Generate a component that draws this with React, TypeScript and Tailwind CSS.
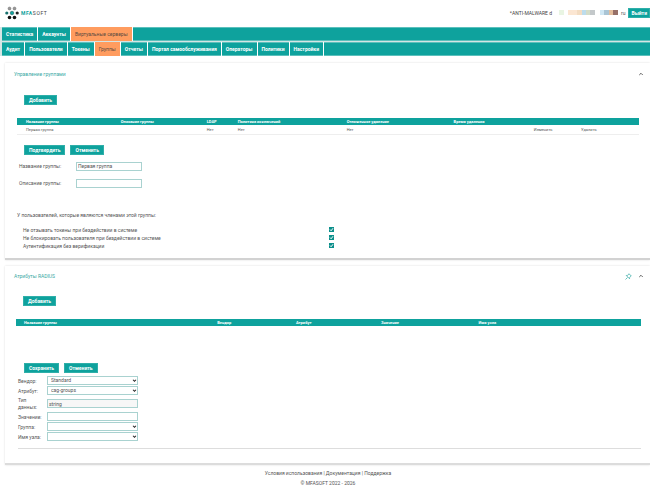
import React, { useState } from "react";
import { ChevronUp } from "lucide-react";

const topTabs = ["Статистика", "Аккаунты", "Виртуальные серверы"];
const subTabs = [
  "Аудит",
  "Пользователи",
  "Токены",
  "Группы",
  "Отчеты",
  "Портал самообслуживания",
  "Операторы",
  "Политики",
  "Настройки",
];

function TabBar({ items, active, label }: { items: string[]; active: string; label: string }) {
  return (
    <nav aria-label={label} className="flex h-[14px] border-y border-[#5cc0bc] bg-[#0ea29d]">
      {items.map((item) => (
        <a
          key={item}
          href="#"
          aria-current={item === active ? "page" : undefined}
          className={
            item === active
              ? "-my-px flex items-center border-r border-white bg-[#ff9c5f] px-1 text-[#5a4a40]"
              : "-my-px flex items-center border-r border-white px-1 font-bold text-white"
          }
        >
          {item}
        </a>
      ))}
    </nav>
  );
}

function Button({ children, narrow = false }: { children: React.ReactNode; narrow?: boolean }) {
  return (
    <button
      type="button"
      className={`h-[10px] border border-[#2fafa9] bg-[#0ea29d] text-[5px] leading-[8px] font-bold text-white ${narrow ? "px-[2px]" : "px-1"}`}
    >
      {children}
    </button>
  );
}

const fieldBox = "h-[9px] border border-[#a9d2d0] text-[5px] leading-[7px] text-[#555]";

function TextRow({ id, label, value }: { id: string; label: string; value: string }) {
  return (
    <div className="flex h-[17px] items-center">
      <label htmlFor={id} className="w-[57px]">
        {label}
      </label>
      <input id={id} type="text" defaultValue={value} className={`${fieldBox} w-[66px] bg-white px-px`} />
    </div>
  );
}

function SelectRow({ id, label, value }: { id: string; label: string; value: string }) {
  return (
    <div className="flex h-[10px] items-center">
      <label htmlFor={id} className="w-[29px]">
        {label}
      </label>
      <div className="relative">
        <select id={id} className={`${fieldBox} block w-[91px] appearance-none bg-white pl-[3px]`} defaultValue={value}>
          <option>{value}</option>
        </select>
        <svg viewBox="0 0 6 4" className="pointer-events-none absolute top-[3px] right-[1px] h-[3px] w-[5px]" fill="none" stroke="#222" strokeWidth="1.4">
          <path d="M1 1l2 2 2-2" />
        </svg>
      </div>
    </div>
  );
}

function Check({ id, label }: { id: string; label: string }) {
  const [on, setOn] = useState(true);
  return (
    <div className="flex h-[8px] items-center">
      <label htmlFor={id} className="w-[306px]">
        {label}
      </label>
      <span className="relative h-[5px] w-[5px]">
        <input
          id={id}
          type="checkbox"
          checked={on}
          onChange={() => setOn(!on)}
          className="block h-[5px] w-[5px] appearance-none border border-[#0b8f8b] bg-white checked:bg-[#0b8f8b]"
        />
        {on && (
          <svg viewBox="0 0 10 10" className="pointer-events-none absolute inset-0 h-[5px] w-[5px]" fill="none" stroke="#fff" strokeWidth="2">
            <path d="M2 5l2.200 2.500L8 2.500" />
          </svg>
        )}
      </span>
    </div>
  );
}

function Logo() {
  return (
    <a href="#" aria-label="MFASOFT" className="flex items-center gap-[2px] text-[5px] tracking-[0.12em] text-[#444]">
      <svg viewBox="0 0 14 14" className="h-[14px] w-[14px]">
        <g fill="#999" stroke="#555" strokeWidth="0.400">
          <circle cx="4.500" cy="2.500" r="1.500" />
          <circle cx="9.500" cy="2.500" r="1.500" />
        </g>
        <circle cx="1.800" cy="7" r="1.600" fill="#16706d" />
        <circle cx="7" cy="7" r="1.800" fill="#0ea29d" stroke="#164c4a" strokeWidth="0.500" />
        <circle cx="12.200" cy="7" r="1.600" fill="#222" />
        <circle cx="4.500" cy="11.500" r="1.800" fill="#111" />
        <circle cx="9.500" cy="11.500" r="1.800" fill="#111" />
      </svg>
      <span>
        <span className="font-bold text-[#0ea29d]">MFA</span>SOFT
      </span>
    </a>
  );
}

function PinIcon() {
  return (
    <svg viewBox="0 0 14 14" className="h-[7px] w-[7px]" fill="none" stroke="#2ba6a1" strokeWidth="1.400" strokeLinejoin="round">
      <path d="M8 1.500l4.500 4.500-1.500.8-1.500 1.700-.5 3-6.500-6.500 3-.5 1.700-1.500zM5 9l-4 4" />
    </svg>
  );
}

const userBlocks = [
  "w-[5px] bg-[#e9f5e3]",
  "ml-[4px] w-[9px] bg-[#fbe6d2]",
  "w-[5px] bg-[#f3dcc2]",
  "w-[4px] bg-[#bcdcec]",
  "w-[4px] bg-[#d3dcc8]",
  "w-[5px] bg-[#c3c8ca]",
  "ml-[5px] w-[4px] bg-[#cfe7f4]",
  "w-[5px] bg-[#a9c4d4]",
  "w-[4px] bg-[#e2bd9c]",
  "w-[5px] bg-[#967068]",
];

export default function App() {
  return (
    <div className="bg-white font-['Roboto','Liberation_Sans',sans-serif] text-[5px] leading-[8px] text-[#555]">
      <header className="flex h-[27px] items-center justify-between pb-[2px] pl-[5px]">
        <Logo />
        <div className="flex items-center">
          <span className="text-[#444]">*ANTI-MALWARE d</span>
          <div aria-hidden="true" className="ml-[7px] flex h-[5px]">
            {userBlocks.map((block) => (
              <span key={block} className={block} />
            ))}
          </div>
          <span className="mr-[3px] ml-[3px]">ru</span>
          <Button narrow>Выйти</Button>
        </div>
      </header>

      <div className="flex flex-col gap-px bg-[#d5e5e4] pl-[2px]">
        <TabBar items={topTabs} active="Виртуальные серверы" label="Разделы" />
        <TabBar items={subTabs} active="Группы" label="Подразделы" />
      </div>

      <main className="flex flex-col gap-[6px] pt-[7px] pl-[5px]">
        <section className="border-b-2 border-[#d2d2d2] pb-[8px] shadow-[0_0_2px_#ddd]">
          <div className="flex h-[21px] items-center justify-between pr-[6px] pl-[9px]">
            <h2 className="text-[#3aa9a5]">Управление группами</h2>
            <button type="button" aria-label="Свернуть группы">
              <ChevronUp className="h-[6px] w-[6px] text-[#333]" strokeWidth={3} />
            </button>
          </div>
          <div className="flex pt-[11px] pl-[19px]">
            <Button>Добавить</Button>
          </div>
          <div className="pt-[13px] pr-[11px] pl-[12px]">
            <table className="w-full table-fixed text-left text-[4px] leading-[7px]">
              <colgroup>
                <col className="w-[16.700%]" />
                <col className="w-[13.800%]" />
                <col className="w-[5%]" />
                <col className="w-[17.500%]" />
                <col className="w-[17.200%]" />
                <col className="w-[12.900%]" />
                <col className="w-[7.600%]" />
                <col />
              </colgroup>
              <thead className="bg-[#0ea29d] text-white">
                <tr>
                  <th className="pl-[9px]">Название группы</th>
                  <th>Описание группы</th>
                  <th>LDAP</th>
                  <th>Политика исключений</th>
                  <th>Отложенное удаление</th>
                  <th>Время удаления</th>
                  <th />
                  <th />
                </tr>
              </thead>
              <tbody>
                <tr className="h-[9px] border-b border-[#eee]">
                  <td className="pl-[9px]">Первая группа</td>
                  <td />
                  <td>Нет</td>
                  <td>Нет</td>
                  <td>Нет</td>
                  <td />
                  <td>
                    <a href="#">Изменить</a>
                  </td>
                  <td>
                    <a href="#">Удалить</a>
                  </td>
                </tr>
              </tbody>
            </table>
          </div>
          <form>
            <div className="flex gap-[5px] pt-[10px] pb-[3px] pl-[19px]">
              <Button>Подтвердить</Button>
              <Button>Отменить</Button>
            </div>
            <div className="pl-[14px]">
              <TextRow id="group-name" label="Название группы:" value="Первая группа" />
              <TextRow id="group-desc" label="Описание группы:" value="" />
            </div>
            <p className="pt-[19px] pl-[12px]">У пользователей, которые являются членами этой группы:</p>
            <div className="pt-[7px] pl-[18px]">
              <Check id="keep-tokens" label="Не отзывать токены при бездействии в системе" />
              <Check id="keep-user" label="Не блокировать пользователя при бездействии в системе" />
              <Check id="no-verify" label="Аутентификация без верификации" />
            </div>
          </form>
        </section>

        <section className="border-b-2 border-[#dcdcdc] pb-[14px] shadow-[0_0_2px_#ddd]">
          <div className="flex h-[21px] items-center justify-between pr-[6px] pl-[9px]">
            <h2 className="text-[#3aa9a5]">Атрибуты RADIUS</h2>
            <div className="flex items-center gap-[6px]">
              <button type="button" aria-label="Закрепить">
                <PinIcon />
              </button>
              <button type="button" aria-label="Свернуть атрибуты">
                <ChevronUp className="h-[6px] w-[6px] text-[#333]" strokeWidth={3} />
              </button>
            </div>
          </div>
          <div className="flex pt-[9px] pl-[18px]">
            <Button>Добавить</Button>
          </div>
          <div className="pt-[13px] pr-[9px] pl-[11px]">
            <table className="w-full table-fixed text-left text-[4px] leading-[7px]">
              <colgroup>
                <col className="w-[32.200%]" />
                <col className="w-[12.600%]" />
                <col className="w-[13.600%]" />
                <col className="w-[15.600%]" />
                <col />
              </colgroup>
              <thead className="bg-[#0ea29d] text-white">
                <tr>
                  <th className="pl-[8px]">Название группы</th>
                  <th>Вендор</th>
                  <th>Атрибут</th>
                  <th>Значение</th>
                  <th>Имя узла</th>
                </tr>
              </thead>
            </table>
          </div>
          <form className="pt-[37px] pr-[9px] pl-[13px]">
            <div className="flex gap-[5px] pb-[3px] pl-[6px]">
              <Button>Сохранить</Button>
              <Button>Отменить</Button>
            </div>
            <SelectRow id="vendor" label="Вендор:" value="Standard" />
            <SelectRow id="attribute" label="Атрибут:" value="cag-groups" />
            <div className="flex h-[16px] items-center leading-[7px]">
              <label htmlFor="data-type" className="w-[29px] pr-[4px]">
                Тип данных:
              </label>
              <input id="data-type" type="text" readOnly defaultValue="string" className={`${fieldBox} w-[91px] bg-[#f7f7f7] px-px`} />
            </div>
            <div className="flex h-[10px] items-center">
              <label htmlFor="value" className="w-[29px]">
                Значение:
              </label>
              <input id="value" type="text" className={`${fieldBox} w-[91px] bg-white px-px`} />
            </div>
            <SelectRow id="group" label="Группа:" value="" />
            <SelectRow id="node" label="Имя узла:" value="" />
            <hr className="mt-[6px] border-[#ddd]" />
          </form>
        </section>
      </main>

      <footer className="flex flex-col items-center gap-[2px] pt-[4px] pl-[6px]">
        <div>
          <a href="#">Условия использования</a> | <a href="#">Документация</a> | <a href="#">Поддержка</a>
        </div>
        <div>© MFASOFT 2022 - 2026</div>
      </footer>
    </div>
  );
}
